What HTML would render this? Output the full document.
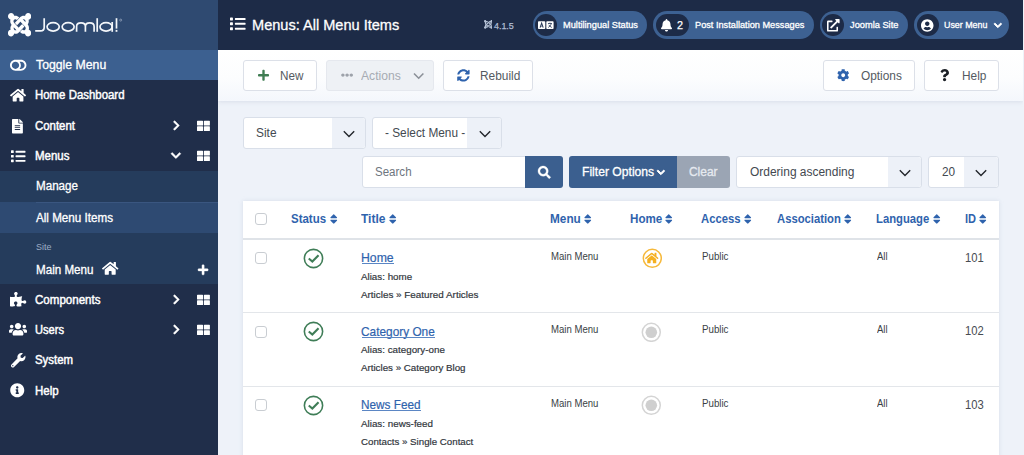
<!DOCTYPE html>
<html><head><meta charset="utf-8"><title>Menus: All Menu Items</title>
<style>
html,body{margin:0;padding:0}
body{width:1024px;height:455px;overflow:hidden;position:relative;background:#eef2f9;font-family:'Liberation Sans',sans-serif;}
div,span,svg{position:absolute;box-sizing:border-box}
span{white-space:pre;transform-origin:0 50%}
</style></head><body>
<div style="left:218px;top:50px;width:805px;height:51px;background:linear-gradient(#ffffff 0%,#fcfdfe 55%,#f4f7fc 100%);box-shadow:0 1px 4px rgba(180,190,208,.35);"></div>
<div style="left:218px;top:0px;width:805px;height:50px;background:#1d2b47;"></div>
<div style="left:0px;top:0px;width:218px;height:455px;background:#202e4a;"></div>
<div style="left:0px;top:0px;width:218px;height:50px;background:#2f4a71;"></div>
<div style="left:0px;top:50px;width:218px;height:30px;background:#3c6090;"></div>
<div style="left:0px;top:171px;width:218px;height:113px;background:#253c5c;"></div>
<div style="left:0px;top:202px;width:218px;height:31px;background:#2e4a72;"></div>
<div style="left:36px;top:202px;width:182px;height:1px;background:#3a5680;"></div>
<svg style="left:7.90px;top:13.28px" width="23.20" height="23.43" viewBox="0.6 32 444.8 420.4" preserveAspectRatio="none"><g fill="#ffffff"><path d="M.6 92.1C.6 58.8 27.4 32 60.4 32c30 0 54.5 21.9 59.2 50.2 32.6-7.6 67.1.6 96.5 30l-44.3 44.3c-20.5-20.5-42.6-16.3-55.4-3.5-14.3 14.3-14.3 37.9 0 52.2l99.5 99.5-44 44.3c-87.7-87.2-49.7-49.7-99.8-99.7-26.8-26.5-35-64.8-24.8-98.9C20.4 144.6.6 120.7.6 92.1z"/><path d="M130.1 208.5l44.3 44.3c10-10 89.7-89.7 99.7-99.8 14.3-14.3 37.6-14.3 51.9 0 12.8 12.8 17 35-3.5 55.4l44 44.3c31.2-31.2 38.5-67.6 28.9-101.2 29.2-4.1 51.9-29.2 51.9-59.5 0-33.2-26.8-60.1-59.8-60.1-30.3 0-55.4 22.8-59.500 52.200-33.500-9.600-70.300-2.500-101.500 28.600-23.300 23.500-73.300 73.500-96.400 96.600z"/><path d="M.6 92.1C.6 58.8 27.4 32 60.4 32c30 0 54.5 21.9 59.2 50.2 32.6-7.6 67.1.6 96.5 30l-44.3 44.3c-20.5-20.5-42.6-16.3-55.4-3.5-14.3 14.3-14.3 37.9 0 52.2l99.5 99.5-44 44.3c-87.7-87.2-49.7-49.7-99.8-99.7-26.8-26.5-35-64.8-24.8-98.9C20.4 144.6.6 120.7.6 92.1z" transform="rotate(180 223 242.2)"/><path d="M130.1 208.5l44.3 44.3c10-10 89.7-89.7 99.7-99.8 14.3-14.3 37.6-14.3 51.9 0 12.8 12.8 17 35-3.5 55.4l44 44.3c31.2-31.2 38.5-67.6 28.9-101.2 29.2-4.1 51.9-29.2 51.9-59.5 0-33.2-26.8-60.1-59.8-60.1-30.3 0-55.4 22.8-59.500 52.200-33.500-9.600-70.300-2.500-101.500 28.600-23.300 23.500-73.300 73.500-96.400 96.600z" transform="rotate(180 223 242.2)"/></g></svg>
<svg style="left:34px;top:14px" width="92" height="22" viewBox="34 14 92 22" preserveAspectRatio="none"><g fill="none" stroke="#f4f7fb" stroke-width="1.7" stroke-linecap="butt"><path d="M44.2 18.2 V27.3 Q44.2 30.95 40.5 30.95 H35.2"/><ellipse cx="53.15" cy="26.85" rx="6.1" ry="4.2"/><ellipse cx="68.15" cy="26.85" rx="6.0" ry="4.2"/><path d="M76.6 31.8 V26.4 Q76.6 22.9 81 22.9 Q85.4 22.9 85.4 26.4 V31.8 M85.4 26.4 Q85.4 22.9 89.75 22.9 Q94.1 22.9 94.1 26.4 V31.8"/><path d="M97.2 18.2 V31.8"/><ellipse cx="106.05" cy="26.85" rx="6.1" ry="4.2"/><path d="M112.2 22 V31.8"/><path d="M116.5 18.2 V28.6"/></g><rect x="115.6" y="29.9" width="1.8" height="1.9" fill="#f4f7fb"/><circle cx="120.7" cy="20.1" r="1" fill="none" stroke="#aebbd0" stroke-width=".6"/></svg>
<svg style="left:9.79px;top:57.70px;overflow:visible" width="16.43" height="14.60" viewBox="0 0 576 512" preserveAspectRatio="none"><path fill="#ffffff" d="M384 64H192C85.961 64 0 149.961 0 256s85.961 192 192 192h192c106.039 0 192-85.961 192-192S490.039 64 384 64zM64 256c0-70.741 57.249-128 128-128 70.741 0 128 57.249 128 128 0 70.741-57.249 128-128 128-70.741 0-128-57.249-128-128zm320 128h-48.905c65.217-72.858 65.236-183.12 0-256H384c70.741 0 128 57.249 128 128 0 70.74-57.249 128-128 128z"/></svg>
<span style="left:35.80px;top:57.36px;font-size:12px;line-height:17px;color:#ffffff;transform:scaleX(1.0216);-webkit-text-stroke:0.3px #ffffff;">Toggle Menu</span>
<svg style="left:9.96px;top:88.35px;overflow:visible" width="16.09" height="14.30" viewBox="0 0 576 512" preserveAspectRatio="none"><path fill="#ffffff" d="M280.37 148.26L96 300.11V464a16 16 0 0 0 16 16l112.06-.29a16 16 0 0 0 15.92-16V368a16 16 0 0 1 16-16h64a16 16 0 0 1 16 16v95.64a16 16 0 0 0 16 16.05L464 480a16 16 0 0 0 16-16V300L295.67 148.26a12.19 12.19 0 0 0-15.3 0zM571.6 251.47L488 182.56V44.05a12 12 0 0 0-12-12h-56a12 12 0 0 0-12 12v72.61L318.47 43a48 48 0 0 0-61 0L4.34 251.47a12 12 0 0 0-1.6 16.9l25.5 31A12 12 0 0 0 45.15 301l235.22-193.74a12.19 12.19 0 0 1 15.3 0L530.9 301a12 12 0 0 0 16.9-1.6l25.5-31a12 12 0 0 0-1.7-16.93z"/></svg>
<span style="left:35.00px;top:87.36px;font-size:12px;line-height:17px;color:#ffffff;transform:scaleX(0.9515);-webkit-text-stroke:0.45px #ffffff;">Home Dashboard</span>
<svg style="left:12.26px;top:118.55px;overflow:visible" width="10.88" height="14.50" viewBox="0 0 384 512" preserveAspectRatio="none"><path fill="#ffffff" d="M224 136V0H24C10.7 0 0 10.7 0 24v464c0 13.3 10.7 24 24 24h336c13.3 0 24-10.7 24-24V160H248c-13.2 0-24-10.8-24-24zm64 236c0 6.6-5.4 12-12 12H108c-6.6 0-12-5.4-12-12v-8c0-6.6 5.4-12 12-12h168c6.6 0 12 5.4 12 12v8zm0-64c0 6.6-5.4 12-12 12H108c-6.6 0-12-5.4-12-12v-8c0-6.6 5.4-12 12-12h168c6.6 0 12 5.4 12 12v8zm0-72v8c0 6.6-5.4 12-12 12H108c-6.6 0-12-5.4-12-12v-8c0-6.6 5.4-12 12-12h168c6.6 0 12 5.4 12 12zm96-114.1v6.1H256V0h6.1c6.4 0 12.5 2.5 17 7l97.9 98c4.5 4.5 7 10.6 7 16.9z"/></svg>
<span style="left:35.00px;top:118.36px;font-size:12px;line-height:17px;color:#ffffff;transform:scaleX(0.9517);-webkit-text-stroke:0.45px #ffffff;">Content</span>
<svg style="left:10.55px;top:148.75px;overflow:visible" width="14.50" height="14.50" viewBox="0 0 512 512" preserveAspectRatio="none"><path fill="#ffffff" d="M80 368H16a16 16 0 0 0-16 16v64a16 16 0 0 0 16 16h64a16 16 0 0 0 16-16v-64a16 16 0 0 0-16-16zm0-320H16A16 16 0 0 0 0 64v64a16 16 0 0 0 16 16h64a16 16 0 0 0 16-16V64a16 16 0 0 0-16-16zm0 160H16a16 16 0 0 0-16 16v64a16 16 0 0 0 16 16h64a16 16 0 0 0 16-16v-64a16 16 0 0 0-16-16zm416 176H176a16 16 0 0 0-16 16v32a16 16 0 0 0 16 16h320a16 16 0 0 0 16-16v-32a16 16 0 0 0-16-16zm0-320H176a16 16 0 0 0-16 16v32a16 16 0 0 0 16 16h320a16 16 0 0 0 16-16V80a16 16 0 0 0-16-16zm0 160H176a16 16 0 0 0-16 16v32a16 16 0 0 0 16 16h320a16 16 0 0 0 16-16v-32a16 16 0 0 0-16-16z"/></svg>
<span style="left:35.00px;top:148.36px;font-size:12px;line-height:17px;color:#ffffff;transform:scaleX(0.9575);-webkit-text-stroke:0.45px #ffffff;">Menus</span>
<span style="left:36.00px;top:178.36px;font-size:12px;line-height:17px;color:#ffffff;transform:scaleX(0.9683);-webkit-text-stroke:0.3px #ffffff;">Manage</span>
<span style="left:36.00px;top:210.36px;font-size:12px;line-height:17px;color:#ffffff;transform:scaleX(0.9703);-webkit-text-stroke:0.3px #ffffff;">All Menu Items</span>
<span style="left:36.20px;top:241.40px;font-size:9px;line-height:13px;color:#9dadc6;transform:scaleX(0.9925);">Site</span>
<span style="left:36.00px;top:262.36px;font-size:12px;line-height:17px;color:#ffffff;transform:scaleX(0.9684);-webkit-text-stroke:0.3px #ffffff;">Main Menu</span>
<svg style="left:102.29px;top:261.30px;overflow:visible" width="16.43" height="14.60" viewBox="0 0 576 512" preserveAspectRatio="none"><path fill="#ffffff" d="M280.37 148.26L96 300.11V464a16 16 0 0 0 16 16l112.06-.29a16 16 0 0 0 15.92-16V368a16 16 0 0 1 16-16h64a16 16 0 0 1 16 16v95.64a16 16 0 0 0 16 16.05L464 480a16 16 0 0 0 16-16V300L295.67 148.26a12.19 12.19 0 0 0-15.3 0zM571.6 251.47L488 182.56V44.05a12 12 0 0 0-12-12h-56a12 12 0 0 0-12 12v72.61L318.47 43a48 48 0 0 0-61 0L4.34 251.47a12 12 0 0 0-1.6 16.9l25.5 31A12 12 0 0 0 45.15 301l235.22-193.74a12.19 12.19 0 0 1 15.3 0L530.9 301a12 12 0 0 0 16.9-1.6l25.5-31a12 12 0 0 0-1.7-16.93z"/></svg>
<svg style="left:197.93px;top:264.10px;overflow:visible" width="10.15" height="11.60" viewBox="0 0 448 512" preserveAspectRatio="none"><path fill="#ffffff" stroke="#ffffff" stroke-width="18" stroke-linejoin="round" d="M416 208H272V64c0-17.67-14.33-32-32-32h-32c-17.67 0-32 14.33-32 32v144H32c-17.67 0-32 14.33-32 32v32c0 17.670 14.330 32 32 32h144v144c0 17.670 14.330 32 32 32h32c17.670 0 32-14.330 32-32V304h144c17.670 0 32-14.330 32-32v-32c0-17.670-14.330-32-32-32z"/></svg>
<svg style="left:10.24px;top:292.25px;overflow:visible" width="16.31" height="14.50" viewBox="0 0 576 512" preserveAspectRatio="none"><path fill="#ffffff" d="M519.442 288.651c-41.519 0-59.5 31.593-82.058 31.593C377.409 320.244 432 144 432 144s-196.288 80-196.288-3.297c0-35.827 36.288-46.25 36.288-85.985C272 19.216 243.885 0 210.539 0c-34.654 0-66.366 18.891-66.366 56.346 0 41.364 31.711 59.277 31.711 81.75C175.885 207.719 0 166.758 0 166.758v333.237s178.635 41.047 178.635-28.662c0-22.473-40-40.107-40-81.471 0-37.456 29.25-56.346 63.577-56.346 33.673 0 61.788 19.216 61.788 54.717 0 39.735-36.288 50.158-36.288 85.985 0 60.803 129.675 25.73 181.23 25.73 0 0-34.725-120.101 25.827-120.101 35.962 0 46.423 36.152 86.308 36.152C556.712 416 576 387.99 576 354.443c0-34.199-18.962-65.792-56.558-65.792z"/></svg>
<span style="left:35.00px;top:292.36px;font-size:12px;line-height:17px;color:#ffffff;transform:scaleX(0.9626);-webkit-text-stroke:0.45px #ffffff;">Components</span>
<svg style="left:8.70px;top:322.30px;overflow:visible" width="18.00" height="14.40" viewBox="0 0 640 512" preserveAspectRatio="none"><path fill="#ffffff" d="M96 224c35.3 0 64-28.7 64-64s-28.7-64-64-64-64 28.7-64 64 28.7 64 64 64zm448 0c35.3 0 64-28.7 64-64s-28.7-64-64-64-64 28.7-64 64 28.7 64 64 64zm32 32h-64c-17.6 0-33.5 7.1-45.1 18.6 40.3 22.1 68.9 62 75.1 109.4h66c17.700 0 32-14.300 32-32v-32c0-35.300-28.700-64-64-64zm-256 0c61.900 0 112-50.100 112-112S381.900 32 320 32 208 82.100 208 144s50.100 112 112 112zm76.800 32h-8.300c-20.800 10-43.900 16-68.500 16s-47.600-6-68.500-16h-8.300C179.600 288 128 339.600 128 403.200V432c0 26.500 21.500 48 48 48h288c26.500 0 48-21.500 48-48v-28.800c0-63.600-51.600-115.200-115.200-115.200zm-223.700-13.400C161.500 263.100 145.600 256 128 256H64c-35.300 0-64 28.700-64 64v32c0 17.700 14.300 32 32 32h65.900c6.300-47.400 34.900-87.300 75.200-109.400z"/></svg>
<span style="left:35.00px;top:322.36px;font-size:12px;line-height:17px;color:#ffffff;transform:scaleX(0.9252);-webkit-text-stroke:0.45px #ffffff;">Users</span>
<svg style="left:10.85px;top:352.95px;overflow:visible" width="14.50" height="14.50" viewBox="0 0 512 512" preserveAspectRatio="none"><path fill="#ffffff" d="M507.73 109.1c-2.24-9.03-13.54-12.09-20.12-5.51l-74.36 74.36-67.88-11.31-11.31-67.88 74.36-74.36c6.620-6.620 3.430-17.900-5.660-20.160-47.380-11.740-99.550.910-136.580 37.930-39.640 39.640-50.550 97.100-34.050 147.200L18.740 402.760c-24.990 24.990-24.990 65.510 0 90.500 24.990 24.990 65.510 24.990 90.500 0l213.210-213.210c50.120 16.710 107.470 5.680 147.370-34.220 37.070-37.070 49.700-89.320 37.910-136.730zM64 472c-13.250 0-24-10.750-24-24 0-13.260 10.750-24 24-24s24 10.740 24 24c0 13.250-10.750 24-24 24z"/></svg>
<span style="left:35.00px;top:352.36px;font-size:12px;line-height:17px;color:#ffffff;transform:scaleX(0.9496);-webkit-text-stroke:0.45px #ffffff;">System</span>
<svg style="left:10.25px;top:383.45px;overflow:visible" width="14.50" height="14.50" viewBox="0 0 512 512" preserveAspectRatio="none"><path fill="#ffffff" d="M256 8C119.043 8 8 119.083 8 256c0 136.997 111.043 248 248 248s248-111.003 248-248C504 119.083 392.957 8 256 8zm0 110c23.196 0 42 18.804 42 42s-18.804 42-42 42-42-18.804-42-42 18.804-42 42-42zm56 254c0 6.627-5.373 12-12 12h-88c-6.627 0-12-5.373-12-12v-24c0-6.627 5.373-12 12-12h12v-64h-12c-6.627 0-12-5.373-12-12v-24c0-6.627 5.373-12 12-12h64c6.627 0 12 5.373 12 12v100h12c6.627 0 12 5.373 12 12v24z"/></svg>
<span style="left:35.00px;top:383.36px;font-size:12px;line-height:17px;color:#ffffff;transform:scaleX(0.9559);-webkit-text-stroke:0.45px #ffffff;">Help</span>
<svg style="left:172.56px;top:120.10px;overflow:visible" width="6.88" height="11.00" viewBox="0 0 320 512" preserveAspectRatio="none"><path fill="#ffffff" stroke="#ffffff" stroke-width="22" stroke-linejoin="round" d="M285.476 272.971L91.132 467.314c-9.373 9.373-24.569 9.373-33.941 0l-22.667-22.667c-9.357-9.357-9.375-24.522-.04-33.901L188.505 256 34.484 101.255c-9.335-9.379-9.317-24.544.04-33.901l22.667-22.667c9.373-9.373 24.569-9.373 33.941 0L285.475 239.03c9.373 9.372 9.373 24.568.001 33.941z"/></svg>
<svg style="left:196.75px;top:119.70px;overflow:visible" width="12.90" height="11.80" viewBox="0 0 512 512" preserveAspectRatio="none"><path fill="#ffffff" d="M296 32h192c13.255 0 24 10.745 24 24v160c0 13.255-10.745 24-24 24H296c-13.255 0-24-10.745-24-24V56c0-13.255 10.745-24 24-24zm-80 0H24C10.745 32 0 42.745 0 56v160c0 13.255 10.745 24 24 24h192c13.255 0 24-10.745 24-24V56c0-13.255-10.745-24-24-24zM0 296v160c0 13.255 10.745 24 24 24h192c13.255 0 24-10.745 24-24V296c0-13.255-10.745-24-24-24H24c-13.255 0-24 10.745-24 24zm296 184h192c13.255 0 24-10.745 24-24V296c0-13.255-10.745-24-24-24H296c-13.255 0-24 10.745-24 24v160c0 13.255 10.745 24 24 24z"/></svg>
<svg style="left:172.56px;top:294.10px;overflow:visible" width="6.88" height="11.00" viewBox="0 0 320 512" preserveAspectRatio="none"><path fill="#ffffff" stroke="#ffffff" stroke-width="22" stroke-linejoin="round" d="M285.476 272.971L91.132 467.314c-9.373 9.373-24.569 9.373-33.941 0l-22.667-22.667c-9.357-9.357-9.375-24.522-.04-33.901L188.505 256 34.484 101.255c-9.335-9.379-9.317-24.544.04-33.901l22.667-22.667c9.373-9.373 24.569-9.373 33.941 0L285.475 239.03c9.373 9.372 9.373 24.568.001 33.941z"/></svg>
<svg style="left:196.75px;top:293.70px;overflow:visible" width="12.90" height="11.80" viewBox="0 0 512 512" preserveAspectRatio="none"><path fill="#ffffff" d="M296 32h192c13.255 0 24 10.745 24 24v160c0 13.255-10.745 24-24 24H296c-13.255 0-24-10.745-24-24V56c0-13.255 10.745-24 24-24zm-80 0H24C10.745 32 0 42.745 0 56v160c0 13.255 10.745 24 24 24h192c13.255 0 24-10.745 24-24V56c0-13.255-10.745-24-24-24zM0 296v160c0 13.255 10.745 24 24 24h192c13.255 0 24-10.745 24-24V296c0-13.255-10.745-24-24-24H24c-13.255 0-24 10.745-24 24zm296 184h192c13.255 0 24-10.745 24-24V296c0-13.255-10.745-24-24-24H296c-13.255 0-24 10.745-24 24v160c0 13.255 10.745 24 24 24z"/></svg>
<svg style="left:172.56px;top:324.30px;overflow:visible" width="6.88" height="11.00" viewBox="0 0 320 512" preserveAspectRatio="none"><path fill="#ffffff" stroke="#ffffff" stroke-width="22" stroke-linejoin="round" d="M285.476 272.971L91.132 467.314c-9.373 9.373-24.569 9.373-33.941 0l-22.667-22.667c-9.357-9.357-9.375-24.522-.04-33.901L188.505 256 34.484 101.255c-9.335-9.379-9.317-24.544.04-33.901l22.667-22.667c9.373-9.373 24.569-9.373 33.941 0L285.475 239.03c9.373 9.372 9.373 24.568.001 33.941z"/></svg>
<svg style="left:196.75px;top:323.90px;overflow:visible" width="12.90" height="11.80" viewBox="0 0 512 512" preserveAspectRatio="none"><path fill="#ffffff" d="M296 32h192c13.255 0 24 10.745 24 24v160c0 13.255-10.745 24-24 24H296c-13.255 0-24-10.745-24-24V56c0-13.255 10.745-24 24-24zm-80 0H24C10.745 32 0 42.745 0 56v160c0 13.255 10.745 24 24 24h192c13.255 0 24-10.745 24-24V56c0-13.255-10.745-24-24-24zM0 296v160c0 13.255 10.745 24 24 24h192c13.255 0 24-10.745 24-24V296c0-13.255-10.745-24-24-24H24c-13.255 0-24 10.745-24 24zm296 184h192c13.255 0 24-10.745 24-24V296c0-13.255-10.745-24-24-24H296c-13.255 0-24 10.745-24 24v160c0 13.255 10.745 24 24 24z"/></svg>
<svg style="left:170.90px;top:150.30px;overflow:visible" width="9.80" height="11.20" viewBox="0 0 448 512" preserveAspectRatio="none"><path fill="#ffffff" stroke="#ffffff" stroke-width="22" stroke-linejoin="round" d="M207.029 381.476L12.686 187.132c-9.373-9.373-9.373-24.569 0-33.941l22.667-22.667c9.357-9.357 24.522-9.375 33.901-.04L224 284.505l154.745-154.021c9.379-9.335 24.544-9.317 33.901.04l22.667 22.667c9.373 9.373 9.373 24.569 0 33.941L240.971 381.476c-9.373 9.372-24.569 9.372-33.942 0z"/></svg>
<svg style="left:196.75px;top:150.00px;overflow:visible" width="12.90" height="11.80" viewBox="0 0 512 512" preserveAspectRatio="none"><path fill="#ffffff" d="M296 32h192c13.255 0 24 10.745 24 24v160c0 13.255-10.745 24-24 24H296c-13.255 0-24-10.745-24-24V56c0-13.255 10.745-24 24-24zm-80 0H24C10.745 32 0 42.745 0 56v160c0 13.255 10.745 24 24 24h192c13.255 0 24-10.745 24-24V56c0-13.255-10.745-24-24-24zM0 296v160c0 13.255 10.745 24 24 24h192c13.255 0 24-10.745 24-24V296c0-13.255-10.745-24-24-24H24c-13.255 0-24 10.745-24 24zm296 184h192c13.255 0 24-10.745 24-24V296c0-13.255-10.745-24-24-24H296c-13.255 0-24 10.745-24 24v160c0 13.255 10.745 24 24 24z"/></svg>
<svg style="left:230.00px;top:16.20px;overflow:visible" width="15.60" height="15.60" viewBox="0 0 512 512" preserveAspectRatio="none"><path fill="#ffffff" d="M80 368H16a16 16 0 0 0-16 16v64a16 16 0 0 0 16 16h64a16 16 0 0 0 16-16v-64a16 16 0 0 0-16-16zm0-320H16A16 16 0 0 0 0 64v64a16 16 0 0 0 16 16h64a16 16 0 0 0 16-16V64a16 16 0 0 0-16-16zm0 160H16a16 16 0 0 0-16 16v64a16 16 0 0 0 16 16h64a16 16 0 0 0 16-16v-64a16 16 0 0 0-16-16zm416 176H176a16 16 0 0 0-16 16v32a16 16 0 0 0 16 16h320a16 16 0 0 0 16-16v-32a16 16 0 0 0-16-16zm0-320H176a16 16 0 0 0-16 16v32a16 16 0 0 0 16 16h320a16 16 0 0 0 16-16V80a16 16 0 0 0-16-16zm0 160H176a16 16 0 0 0-16 16v32a16 16 0 0 0 16 16h320a16 16 0 0 0 16-16v-32a16 16 0 0 0-16-16z"/></svg>
<span style="left:251.75px;top:14.32px;font-size:15px;line-height:21px;color:#ffffff;transform:scaleX(0.9704);-webkit-text-stroke:0.3px #ffffff;">Menus: All Menu Items</span>
<svg style="left:483.65px;top:20.21px" width="8.70" height="8.79" viewBox="0.6 32 444.8 420.4" preserveAspectRatio="none"><g fill="#b4c1d5"><path d="M.6 92.1C.6 58.8 27.4 32 60.4 32c30 0 54.5 21.9 59.2 50.2 32.6-7.6 67.1.6 96.5 30l-44.3 44.3c-20.5-20.5-42.6-16.3-55.4-3.5-14.3 14.3-14.3 37.9 0 52.2l99.5 99.5-44 44.3c-87.7-87.2-49.7-49.7-99.8-99.7-26.8-26.5-35-64.8-24.8-98.9C20.4 144.6.6 120.7.6 92.1z"/><path d="M130.1 208.5l44.3 44.3c10-10 89.7-89.7 99.7-99.8 14.3-14.3 37.6-14.3 51.9 0 12.8 12.8 17 35-3.5 55.4l44 44.3c31.2-31.2 38.5-67.6 28.9-101.2 29.2-4.1 51.9-29.2 51.9-59.5 0-33.2-26.8-60.1-59.8-60.1-30.3 0-55.4 22.8-59.500 52.200-33.500-9.600-70.300-2.500-101.500 28.600-23.300 23.500-73.300 73.500-96.400 96.600z"/><path d="M.6 92.1C.6 58.8 27.4 32 60.4 32c30 0 54.5 21.9 59.2 50.2 32.6-7.6 67.1.6 96.5 30l-44.3 44.3c-20.5-20.5-42.6-16.3-55.4-3.5-14.3 14.3-14.3 37.9 0 52.2l99.5 99.5-44 44.3c-87.7-87.2-49.7-49.7-99.8-99.7-26.8-26.5-35-64.8-24.8-98.9C20.4 144.6.6 120.7.6 92.1z" transform="rotate(180 223 242.2)"/><path d="M130.1 208.5l44.3 44.3c10-10 89.7-89.7 99.7-99.8 14.3-14.3 37.6-14.3 51.9 0 12.8 12.8 17 35-3.5 55.4l44 44.3c31.2-31.2 38.5-67.6 28.9-101.2 29.2-4.1 51.9-29.2 51.9-59.5 0-33.2-26.8-60.1-59.8-60.1-30.3 0-55.4 22.8-59.500 52.200-33.500-9.600-70.300-2.500-101.500 28.600-23.300 23.500-73.300 73.500-96.400 96.600z" transform="rotate(180 223 242.2)"/></g></svg>
<span style="left:494.40px;top:19.19px;font-size:9.6px;line-height:13px;color:#b0bed3;transform:scaleX(0.9277);-webkit-text-stroke:0.25px #b0bed3;">4.1.5</span>
<div style="left:532.5px;top:11px;width:114.5px;height:28px;background:#3d6192;border-radius:14px;"></div>
<div style="left:535px;top:14px;width:22px;height:22px;background:#1d2b47;border-radius:11px;"></div>
<svg style="left:538.2px;top:20.9px" width="15.6" height="8.3" viewBox="0 0 15 10" preserveAspectRatio="none"><rect x="0" y="0.4" width="7" height="9.2" rx=".8" fill="#fff"/><rect x="8" y="0.4" width="7" height="9.2" rx=".8" fill="#fff"/><path d="M2 8 L3.5 2.4 L5 8 M2.5 6.2 H4.5" fill="none" stroke="#2a3b5a" stroke-width="1"/><path d="M9.6 3 H13.4 M11.5 2 V3 M12.9 3 Q12.3 6.2 9.8 7.8 M10.4 4.6 Q11.4 6.8 13.3 7.8" fill="none" stroke="#2a3b5a" stroke-width=".9"/></svg>
<span style="left:563.00px;top:19.30px;font-size:9.3px;line-height:13px;color:#ffffff;transform:scaleX(0.9940);-webkit-text-stroke:0.3px #ffffff;">Multilingual Status</span>
<div style="left:653px;top:11px;width:161px;height:28px;background:#3d6192;border-radius:14px;"></div>
<div style="left:655.5px;top:14px;width:33px;height:22px;background:#1d2b47;border-radius:11px;"></div>
<svg style="left:660.79px;top:18.70px;overflow:visible" width="11.03" height="12.60" viewBox="0 0 448 512" preserveAspectRatio="none"><path fill="#ffffff" d="M224 512c35.32 0 63.97-28.65 63.97-64H160.03c0 35.35 28.65 64 63.97 64zm215.39-149.71c-19.32-20.76-55.47-51.99-55.47-154.29 0-77.7-54.48-139.9-127.94-155.16V32c0-17.67-14.32-32-31.98-32s-31.98 14.33-31.98 32v20.84C118.56 68.1 64.08 130.3 64.08 208c0 102.3-36.15 133.53-55.47 154.29-6 6.45-8.66 14.16-8.61 21.71.11 16.4 12.98 32 32.1 32h383.8c19.12 0 32-15.6 32.1-32 .05-7.55-2.61-15.27-8.61-21.71z"/></svg>
<span style="left:677.40px;top:17.92px;font-size:10.4px;line-height:15px;color:#ffffff;transform:scaleX(1.0378);-webkit-text-stroke:0.25px #ffffff;">2</span>
<span style="left:695.25px;top:19.30px;font-size:9.3px;line-height:13px;color:#ffffff;transform:scaleX(0.9888);-webkit-text-stroke:0.3px #ffffff;">Post Installation Messages</span>
<div style="left:819.6px;top:11px;width:88.14999999999998px;height:28px;background:#3d6192;border-radius:14px;"></div>
<div style="left:822.4px;top:14px;width:22px;height:22px;background:#1d2b47;border-radius:11px;"></div>
<svg style="left:827.30px;top:18.50px;overflow:visible" width="12.60" height="12.60" viewBox="0 0 512 512" preserveAspectRatio="none"><path fill="#ffffff" d="M432,320H400a16,16,0,0,0-16,16V448H64V128H208a16,16,0,0,0,16-16V80a16,16,0,0,0-16-16H48A48,48,0,0,0,0,112V464a48,48,0,0,0,48,48H400a48,48,0,0,0,48-48V336A16,16,0,0,0,432,320ZM488,0h-128c-21.370,0-32.050,25.910-17,41l35.730,35.730L135,320.370a24,24,0,0,0,0,34L157.670,377a24,24,0,0,0,34,0L435.280,133.320,471,169c15,15,41,4.500,41-17V24A24,24,0,0,0,488,0Z"/></svg>
<span style="left:850.00px;top:19.30px;font-size:9.3px;line-height:13px;color:#ffffff;transform:scaleX(0.9963);-webkit-text-stroke:0.3px #ffffff;">Joomla Site</span>
<div style="left:914px;top:11px;width:94.70000000000005px;height:28px;background:#3d6192;border-radius:14px;"></div>
<div style="left:916.5px;top:14px;width:22px;height:22px;background:#1d2b47;border-radius:11px;"></div>
<svg style="left:921.15px;top:18.55px;overflow:visible" width="12.50" height="12.90" viewBox="0 0 496 512" preserveAspectRatio="none"><path fill="#ffffff" d="M248 8C111 8 0 119 0 256s111 248 248 248 248-111 248-248S385 8 248 8zm0 96c48.6 0 88 39.4 88 88s-39.4 88-88 88-88-39.4-88-88 39.4-88 88-88zm0 344c-58.7 0-111.3-26.6-146.5-68.2 18.8-35.4 55.6-59.8 98.5-59.8 2.4 0 4.8.4 7.1 1.100 13 4.200 26.600 6.900 40.900 6.900 14.300 0 28-2.700 40.900-6.900 2.300-.700 4.700-1.100 7.100-1.100 42.900 0 79.700 24.400 98.500 59.800C359.300 421.400 306.700 448 248 448z"/></svg>
<span style="left:944.00px;top:19.30px;font-size:9.3px;line-height:13px;color:#ffffff;transform:scaleX(0.9545);-webkit-text-stroke:0.3px #ffffff;">User Menu</span>
<svg style="left:993.55px;top:20.80px;overflow:visible" width="7.70" height="8.80" viewBox="0 0 448 512" preserveAspectRatio="none"><path fill="#ffffff" stroke="#ffffff" stroke-width="50" stroke-linejoin="round" d="M207.029 381.476L12.686 187.132c-9.373-9.373-9.373-24.569 0-33.941l22.667-22.667c9.357-9.357 24.522-9.375 33.901-.04L224 284.505l154.745-154.021c9.379-9.335 24.544-9.317 33.901.04l22.667 22.667c9.373 9.373 9.373 24.569 0 33.941L240.971 381.476c-9.373 9.372-24.569 9.372-33.942 0z"/></svg>
<div style="left:243px;top:60px;width:73.5px;height:31px;background:#fff;border:1px solid #dce0e8;border-radius:3px;"></div>
<svg style="left:257.99px;top:68.70px;overflow:visible" width="11.03" height="12.60" viewBox="0 0 448 512" preserveAspectRatio="none"><path fill="#3f7d52" d="M416 208H272V64c0-17.67-14.33-32-32-32h-32c-17.67 0-32 14.33-32 32v144H32c-17.67 0-32 14.33-32 32v32c0 17.670 14.330 32 32 32h144v144c0 17.670 14.330 32 32 32h32c17.670 0 32-14.330 32-32V304h144c17.670 0 32-14.330 32-32v-32c0-17.670-14.330-32-32-32z"/></svg>
<span style="left:280.40px;top:66.69px;font-size:12.5px;line-height:18px;color:#545a61;transform:scaleX(0.9354);">New</span>
<div style="left:326.4px;top:60px;width:107.20000000000005px;height:31px;background:#eef1f5;border:1px solid #e5e8ee;border-radius:3px;"></div>
<svg style="left:340.80px;top:69.30px;overflow:visible" width="12.20" height="12.20" viewBox="0 0 512 512" preserveAspectRatio="none"><path fill="#9da2aa" d="M328 256c0 39.8-32.2 72-72 72s-72-32.2-72-72 32.2-72 72-72 72 32.2 72 72zm104-72c-39.8 0-72 32.2-72 72s32.2 72 72 72 72-32.2 72-72-32.2-72-72-72zm-352 0c-39.8 0-72 32.2-72 72s32.2 72 72 72 72-32.2 72-72-32.2-72-72-72z"/></svg>
<span style="left:361.00px;top:66.69px;font-size:12.5px;line-height:18px;color:#a6abb3;transform:scaleX(0.9707);">Actions</span>
<svg style="left:413px;top:71.5px" width="11.4" height="8" viewBox="0 0 11.4 8" preserveAspectRatio="none"><path d="M1 1.5 L5.7 6.2 L10.4 1.5" fill="none" stroke="#8b9098" stroke-width="1.6"/></svg>
<div style="left:443px;top:60px;width:89.5px;height:31px;background:#fff;border:1px solid #dce0e8;border-radius:3px;"></div>
<svg style="left:456.90px;top:69.00px;overflow:visible" width="12.80" height="12.80" viewBox="0 0 512 512" preserveAspectRatio="none"><path fill="#2f63ad" d="M370.72 133.28C339.458 104.008 298.888 87.962 255.848 88c-77.458.068-144.328 53.178-162.791 126.85-1.344 5.363-6.122 9.15-11.651 9.15H24.103c-7.498 0-13.194-6.807-11.807-14.176C33.933 94.924 134.813 8 256 8c66.448 0 126.791 26.136 171.315 68.685L463.03 40.97C478.149 25.851 504 36.559 504 57.941V192c0 13.255-10.745 24-24 24H345.941c-21.382 0-32.09-25.851-16.971-40.971l41.75-41.749zM32 296h134.059c21.382 0 32.09 25.851 16.971 40.971l-41.75 41.75c31.262 29.273 71.835 45.319 114.876 45.28 77.418-.07 144.315-53.144 162.787-126.849 1.344-5.363 6.122-9.15 11.651-9.15h57.304c7.498 0 13.194 6.807 11.807 14.176C478.067 417.076 377.187 504 256 504c-66.448 0-126.791-26.136-171.315-68.685L48.97 471.03C33.851 486.149 8 475.441 8 454.059V320c0-13.255 10.745-24 24-24z"/></svg>
<span style="left:479.80px;top:66.69px;font-size:12.5px;line-height:18px;color:#545a61;transform:scaleX(0.9530);">Rebuild</span>
<div style="left:823.4px;top:60px;width:91.20000000000005px;height:31px;background:#fff;border:1px solid #dce0e8;border-radius:3px;"></div>
<svg style="left:837.20px;top:69.20px;overflow:visible" width="12.40" height="12.40" viewBox="0 0 512 512" preserveAspectRatio="none"><path fill="#2f63ad" d="M487.4 315.7l-42.6-24.6c4.3-23.2 4.3-47 0-70.2l42.6-24.6c4.9-2.8 7.1-8.6 5.5-14-11.1-35.6-30-67.8-54.7-94.600-3.800-4.100-10-5.100-14.800-2.300L380.800 110c-17.900-15.400-38.500-27.300-60.800-35.100V25.800c0-5.600-3.900-10.500-9.400-11.700-36.700-8.200-74.300-7.800-109.200 0-5.500 1.200-9.400 6.100-9.400 11.700V75c-22.200 7.900-42.800 19.800-60.800 35.100L88.700 85.500c-4.900-2.800-11-1.900-14.800 2.300-24.700 26.700-43.600 58.900-54.700 94.600-1.700 5.400.6 11.200 5.500 14L67.300 221c-4.300 23.200-4.300 47 0 70.200l-42.600 24.600c-4.900 2.800-7.100 8.600-5.500 14 11.100 35.600 30 67.800 54.700 94.600 3.800 4.100 10 5.100 14.800 2.300l42.600-24.600c17.900 15.400 38.500 27.300 60.800 35.100v49.200c0 5.600 3.900 10.500 9.400 11.700 36.700 8.200 74.300 7.800 109.200 0 5.500-1.200 9.400-6.100 9.400-11.700v-49.200c22.200-7.900 42.800-19.800 60.800-35.100l42.600 24.600c4.900 2.800 11 1.900 14.800-2.300 24.700-26.700 43.600-58.900 54.700-94.600 1.500-5.500-.7-11.300-5.600-14.100zM256 336c-44.100 0-80-35.900-80-80s35.900-80 80-80 80 35.900 80 80-35.900 80-80 80z"/></svg>
<span style="left:860.90px;top:66.69px;font-size:12.5px;line-height:18px;color:#545a61;transform:scaleX(0.9491);">Options</span>
<div style="left:924.3px;top:60px;width:74.40000000000009px;height:31px;background:#fff;border:1px solid #dce0e8;border-radius:3px;"></div>
<svg style="left:940.12px;top:69.20px;overflow:visible" width="9.15" height="12.20" viewBox="0 0 384 512" preserveAspectRatio="none"><path fill="#1c2026" d="M202.021 0C122.202 0 70.503 32.703 29.914 91.026c-7.363 10.58-5.093 25.086 5.178 32.874l43.138 32.709c10.373 7.865 25.132 6.026 33.253-4.148 25.049-31.381 43.63-49.449 82.757-49.449 30.764 0 68.816 19.799 68.816 49.631 0 22.552-18.617 34.134-48.993 51.164-35.423 19.86-82.299 44.576-82.299 106.405V320c0 13.255 10.745 24 24 24h72.471c13.255 0 24-10.745 24-24v-5.773c0-42.86 125.268-44.645 125.268-160.627C377.504 66.256 286.902 0 202.021 0zM192 373.459c-38.196 0-69.271 31.075-69.271 69.271 0 38.195 31.075 69.27 69.271 69.27s69.271-31.075 69.271-69.271-31.075-69.27-69.271-69.27z"/></svg>
<span style="left:961.80px;top:66.69px;font-size:12.5px;line-height:18px;color:#545a61;transform:scaleX(0.9487);">Help</span>
<div style="left:243px;top:117px;width:122.80000000000001px;height:31.5px;background:#fff;border:1px solid #d9dfe9;border-radius:3px;overflow:hidden;"></div>
<div style="left:332px;top:118px;width:32.80000000000001px;height:29.5px;background:#edf1f8;border-radius:0 3px 3px 0;"></div>
<svg style="left:342.9px;top:129.65px" width="12" height="8" viewBox="0 0 12 8" preserveAspectRatio="none"><path d="M0.8 1.2 L6 6.4 L11.2 1.2" fill="none" stroke="#22262b" stroke-width="1.4"/></svg>
<span style="left:255.50px;top:123.69px;font-size:12.5px;line-height:18px;color:#434950;transform:scaleX(0.9514);">Site</span>
<div style="left:372.2px;top:117px;width:129.55px;height:31.5px;background:#fff;border:1px solid #d9dfe9;border-radius:3px;overflow:hidden;"></div>
<div style="left:467.4px;top:118px;width:33.35000000000002px;height:29.5px;background:#edf1f8;border-radius:0 3px 3px 0;"></div>
<svg style="left:478.57px;top:129.65px" width="12" height="8" viewBox="0 0 12 8" preserveAspectRatio="none"><path d="M0.8 1.2 L6 6.4 L11.2 1.2" fill="none" stroke="#22262b" stroke-width="1.4"/></svg>
<span style="left:384.80px;top:123.69px;font-size:12.5px;line-height:18px;color:#434950;transform:scaleX(0.9461);">- Select Menu -</span>
<div style="left:362.4px;top:156px;width:165px;height:32px;background:#fff;border:1px solid #d9dfe9;border-radius:3px 0 0 3px;"></div>
<span style="left:375.20px;top:162.69px;font-size:12.5px;line-height:18px;color:#6d757e;transform:scaleX(0.9228);">Search</span>
<div style="left:524.7px;top:156px;width:38.1px;height:32px;background:#3b5f8f;border-radius:0 3px 3px 0;"></div>
<svg style="left:537.70px;top:165.50px;overflow:visible" width="12.60" height="12.60" viewBox="0 0 512 512" preserveAspectRatio="none"><path fill="#ffffff" stroke="#ffffff" stroke-width="14" stroke-linejoin="round" d="M505 442.7L405.3 343c-4.5-4.5-10.6-7-17-7H372c27.6-35.3 44-79.7 44-128C416 93.1 322.9 0 208 0S0 93.1 0 208s93.1 208 208 208c48.3 0 92.7-16.4 128-44v16.300c0 6.400 2.500 12.500 7 17l99.700 99.700c9.400 9.400 24.600 9.400 33.900 0l28.300-28.300c9.400-9.400 9.400-24.600.1-34zM208 336c-70.7 0-128-57.200-128-128 0-70.700 57.200-128 128-128 70.700 0 128 57.200 128 128 0 70.700-57.200 128-128 128z"/></svg>
<div style="left:569px;top:156px;width:108px;height:32px;background:#3b5f8f;border-radius:3px 0 0 3px;"></div>
<span style="left:581.60px;top:162.69px;font-size:12.5px;line-height:18px;color:#ffffff;transform:scaleX(0.9705);-webkit-text-stroke:0.3px #ffffff;">Filter Options</span>
<svg style="left:656.75px;top:167.80px;overflow:visible" width="7.70" height="8.80" viewBox="0 0 448 512" preserveAspectRatio="none"><path fill="#ffffff" stroke="#ffffff" stroke-width="55" stroke-linejoin="round" d="M207.029 381.476L12.686 187.132c-9.373-9.373-9.373-24.569 0-33.941l22.667-22.667c9.357-9.357 24.522-9.375 33.901-.04L224 284.505l154.745-154.021c9.379-9.335 24.544-9.317 33.901.04l22.667 22.667c9.373 9.373 9.373 24.569 0 33.941L240.971 381.476c-9.373 9.372-24.569 9.372-33.942 0z"/></svg>
<div style="left:677px;top:156px;width:53.3px;height:32px;background:#9ba5b4;border-radius:0 3px 3px 0;"></div>
<span style="left:688.80px;top:162.69px;font-size:12.5px;line-height:18px;color:#e6eaf0;transform:scaleX(0.9540);-webkit-text-stroke:0.3px #e6eaf0;">Clear</span>
<div style="left:735.9px;top:156px;width:186.30000000000007px;height:32px;background:#fff;border:1px solid #d9dfe9;border-radius:3px;overflow:hidden;"></div>
<div style="left:887.75px;top:157px;width:33.450000000000045px;height:30px;background:#edf1f8;border-radius:0 3px 3px 0;"></div>
<svg style="left:898.98px;top:168.9px" width="12" height="8" viewBox="0 0 12 8" preserveAspectRatio="none"><path d="M0.8 1.2 L6 6.4 L11.2 1.2" fill="none" stroke="#22262b" stroke-width="1.4"/></svg>
<span style="left:749.60px;top:162.69px;font-size:12.5px;line-height:18px;color:#434950;transform:scaleX(0.9568);">Ordering ascending</span>
<div style="left:928.4px;top:156px;width:70.30000000000007px;height:32px;background:#fff;border:1px solid #d9dfe9;border-radius:3px;overflow:hidden;"></div>
<div style="left:964px;top:157px;width:33.700000000000045px;height:30px;background:#edf1f8;border-radius:0 3px 3px 0;"></div>
<svg style="left:975.35px;top:168.9px" width="12" height="8" viewBox="0 0 12 8" preserveAspectRatio="none"><path d="M0.8 1.2 L6 6.4 L11.2 1.2" fill="none" stroke="#22262b" stroke-width="1.4"/></svg>
<span style="left:941.50px;top:162.69px;font-size:12.5px;line-height:18px;color:#434950;transform:scaleX(0.9420);">20</span>
<div style="left:243px;top:200.6px;width:756px;height:260px;background:#fff;box-shadow:0 0 4px rgba(170,182,205,.35);"></div>
<div style="left:243px;top:237.7px;width:756px;height:2px;background:#dfe3e8;"></div>
<div style="left:243px;top:312px;width:756px;height:1px;background:#e3e6ea;"></div>
<div style="left:243px;top:386px;width:756px;height:1px;background:#e3e6ea;"></div>
<div style="left:255.2px;top:213.3px;width:12px;height:12px;background:#fff;border:1px solid #c9cdd2;border-radius:3px;"></div>
<div style="left:255.2px;top:252.3px;width:12px;height:12px;background:#fff;border:1px solid #c9cdd2;border-radius:3px;"></div>
<div style="left:255.2px;top:325.8px;width:12px;height:12px;background:#fff;border:1px solid #c9cdd2;border-radius:3px;"></div>
<div style="left:255.2px;top:399.3px;width:12px;height:12px;background:#fff;border:1px solid #c9cdd2;border-radius:3px;"></div>
<span style="left:291.15px;top:209.69px;font-size:12.5px;line-height:18px;color:#2f63ad;transform:scaleX(0.9175);font-weight:700;">Status</span>
<svg style="left:329.85px;top:212.60px;overflow:visible" width="7.50" height="12.00" viewBox="0 0 320 512" preserveAspectRatio="none"><path fill="#2f63ad" d="M41 288h238c21.4 0 32.1 25.9 17 41L177 448c-9.4 9.4-24.6 9.4-33.9 0L24 329c-15.1-15.1-4.4-41 17-41zm255-105L177 64c-9.4-9.4-24.6-9.4-33.9 0L24 183c-15.1 15.100-4.400 41 17 41h238c21.400 0 32.100-25.900 17-41z"/></svg>
<span style="left:361.15px;top:209.69px;font-size:12.5px;line-height:18px;color:#2f63ad;transform:scaleX(0.9594);font-weight:700;">Title</span>
<svg style="left:389.25px;top:212.60px;overflow:visible" width="7.50" height="12.00" viewBox="0 0 320 512" preserveAspectRatio="none"><path fill="#2f63ad" d="M41 288h238c21.4 0 32.1 25.9 17 41L177 448c-9.4 9.4-24.6 9.4-33.9 0L24 329c-15.1-15.1-4.4-41 17-41zm255-105L177 64c-9.4-9.4-24.6-9.4-33.9 0L24 183c-15.1 15.100-4.400 41 17 41h238c21.400 0 32.100-25.900 17-41z"/></svg>
<span style="left:550.00px;top:209.69px;font-size:12.5px;line-height:18px;color:#2f63ad;transform:scaleX(0.9436);font-weight:700;">Menu</span>
<svg style="left:584.05px;top:212.60px;overflow:visible" width="7.50" height="12.00" viewBox="0 0 320 512" preserveAspectRatio="none"><path fill="#2f63ad" d="M41 288h238c21.4 0 32.1 25.9 17 41L177 448c-9.4 9.4-24.6 9.4-33.9 0L24 329c-15.1-15.1-4.4-41 17-41zm255-105L177 64c-9.4-9.4-24.6-9.4-33.9 0L24 183c-15.1 15.100-4.400 41 17 41h238c21.400 0 32.100-25.900 17-41z"/></svg>
<span style="left:629.70px;top:209.69px;font-size:12.5px;line-height:18px;color:#2f63ad;transform:scaleX(0.9299);font-weight:700;">Home</span>
<svg style="left:665.25px;top:212.60px;overflow:visible" width="7.50" height="12.00" viewBox="0 0 320 512" preserveAspectRatio="none"><path fill="#2f63ad" d="M41 288h238c21.4 0 32.1 25.9 17 41L177 448c-9.4 9.4-24.6 9.4-33.9 0L24 329c-15.1-15.1-4.4-41 17-41zm255-105L177 64c-9.4-9.4-24.6-9.4-33.9 0L24 183c-15.1 15.100-4.400 41 17 41h238c21.400 0 32.100-25.900 17-41z"/></svg>
<span style="left:700.90px;top:209.69px;font-size:12.5px;line-height:18px;color:#2f63ad;transform:scaleX(0.9019);font-weight:700;">Access</span>
<svg style="left:744.05px;top:212.60px;overflow:visible" width="7.50" height="12.00" viewBox="0 0 320 512" preserveAspectRatio="none"><path fill="#2f63ad" d="M41 288h238c21.4 0 32.1 25.9 17 41L177 448c-9.4 9.4-24.6 9.4-33.9 0L24 329c-15.1-15.1-4.4-41 17-41zm255-105L177 64c-9.4-9.4-24.6-9.4-33.9 0L24 183c-15.1 15.100-4.400 41 17 41h238c21.400 0 32.100-25.900 17-41z"/></svg>
<span style="left:776.80px;top:209.69px;font-size:12.5px;line-height:18px;color:#2f63ad;transform:scaleX(0.9018);font-weight:700;">Association</span>
<svg style="left:844.25px;top:212.60px;overflow:visible" width="7.50" height="12.00" viewBox="0 0 320 512" preserveAspectRatio="none"><path fill="#2f63ad" d="M41 288h238c21.4 0 32.1 25.9 17 41L177 448c-9.4 9.4-24.6 9.4-33.9 0L24 329c-15.1-15.1-4.4-41 17-41zm255-105L177 64c-9.4-9.4-24.6-9.4-33.9 0L24 183c-15.1 15.100-4.400 41 17 41h238c21.400 0 32.100-25.900 17-41z"/></svg>
<span style="left:876.20px;top:209.69px;font-size:12.5px;line-height:18px;color:#2f63ad;transform:scaleX(0.9010);font-weight:700;">Language</span>
<svg style="left:933.05px;top:212.60px;overflow:visible" width="7.50" height="12.00" viewBox="0 0 320 512" preserveAspectRatio="none"><path fill="#2f63ad" d="M41 288h238c21.4 0 32.1 25.9 17 41L177 448c-9.4 9.4-24.6 9.4-33.9 0L24 329c-15.1-15.1-4.4-41 17-41zm255-105L177 64c-9.4-9.4-24.6-9.4-33.9 0L24 183c-15.1 15.100-4.400 41 17 41h238c21.400 0 32.100-25.900 17-41z"/></svg>
<span style="left:964.65px;top:209.69px;font-size:12.5px;line-height:18px;color:#2f63ad;transform:scaleX(0.8840);font-weight:700;">ID</span>
<svg style="left:979.25px;top:212.60px;overflow:visible" width="7.50" height="12.00" viewBox="0 0 320 512" preserveAspectRatio="none"><path fill="#2f63ad" d="M41 288h238c21.4 0 32.1 25.9 17 41L177 448c-9.4 9.4-24.6 9.4-33.9 0L24 329c-15.1-15.1-4.4-41 17-41zm255-105L177 64c-9.4-9.4-24.6-9.4-33.9 0L24 183c-15.1 15.100-4.400 41 17 41h238c21.400 0 32.100-25.900 17-41z"/></svg>
<svg style="left:303.2px;top:247.8px" width="21" height="21" viewBox="0 0 20 20" preserveAspectRatio="none"><circle cx="10" cy="10" r="8.7" fill="none" stroke="#3f7d57" stroke-width="1.5"/><path d="M5.5 10 L8.9 12.9 L14.8 6.9" fill="none" stroke="#3f7d57" stroke-width="2"/></svg>
<span style="left:361.20px;top:248.52px;font-size:13px;line-height:18px;color:#2f63ad;transform:scaleX(0.9427);-webkit-text-stroke:0.2px #2f63ad;">Home</span>
<div style="left:361.6px;top:263px;width:32.299999999999955px;height:1px;background:#5b86c4;"></div>
<span style="left:361.30px;top:270.26px;font-size:9.4px;line-height:13px;color:#30353b;transform:scaleX(1.0432);-webkit-text-stroke:0.18px #30353b;">Alias: home</span>
<span style="left:361.30px;top:288.26px;font-size:9.4px;line-height:13px;color:#30353b;transform:scaleX(1.0528);-webkit-text-stroke:0.18px #30353b;">Articles » Featured Articles</span>
<span style="left:550.60px;top:249.56px;font-size:10px;line-height:14px;color:#3a3f45;transform:scaleX(0.9582);">Main Menu</span>
<svg style="left:641.5px;top:248.10000000000002px" width="20.6" height="20.6" viewBox="0 0 20.6 20.6" preserveAspectRatio="none"><circle cx="10.3" cy="10.3" r="9.0" fill="#fff" stroke="#f6b93b" stroke-width="1.5"/></svg>
<svg style="left:645.15px;top:251.95px;overflow:visible" width="13.50" height="12.00" viewBox="0 0 576 512" preserveAspectRatio="none"><path fill="#f5b021" d="M280.37 148.26L96 300.11V464a16 16 0 0 0 16 16l112.06-.29a16 16 0 0 0 15.92-16V368a16 16 0 0 1 16-16h64a16 16 0 0 1 16 16v95.64a16 16 0 0 0 16 16.05L464 480a16 16 0 0 0 16-16V300L295.67 148.26a12.19 12.19 0 0 0-15.3 0zM571.6 251.47L488 182.56V44.05a12 12 0 0 0-12-12h-56a12 12 0 0 0-12 12v72.61L318.47 43a48 48 0 0 0-61 0L4.34 251.47a12 12 0 0 0-1.6 16.9l25.5 31A12 12 0 0 0 45.15 301l235.22-193.74a12.19 12.19 0 0 1 15.3 0L530.9 301a12 12 0 0 0 16.9-1.6l25.5-31a12 12 0 0 0-1.7-16.93z"/></svg>
<span style="left:701.50px;top:249.56px;font-size:10px;line-height:14px;color:#3a3f45;transform:scaleX(0.9725);">Public</span>
<span style="left:876.80px;top:249.56px;font-size:10px;line-height:14px;color:#3a3f45;transform:scaleX(0.9528);">All</span>
<span style="left:965.25px;top:248.69px;font-size:12.5px;line-height:18px;color:#474c52;transform:scaleX(0.8989);">101</span>
<svg style="left:303.2px;top:321.3px" width="21" height="21" viewBox="0 0 20 20" preserveAspectRatio="none"><circle cx="10" cy="10" r="8.7" fill="none" stroke="#3f7d57" stroke-width="1.5"/><path d="M5.5 10 L8.9 12.9 L14.8 6.9" fill="none" stroke="#3f7d57" stroke-width="2"/></svg>
<span style="left:361.20px;top:322.52px;font-size:13px;line-height:18px;color:#2f63ad;transform:scaleX(0.9118);-webkit-text-stroke:0.2px #2f63ad;">Category One</span>
<div style="left:361.6px;top:337px;width:73.39999999999998px;height:1px;background:#5b86c4;"></div>
<span style="left:361.30px;top:343.26px;font-size:9.4px;line-height:13px;color:#30353b;transform:scaleX(1.0453);-webkit-text-stroke:0.18px #30353b;">Alias: category-one</span>
<span style="left:361.30px;top:361.26px;font-size:9.4px;line-height:13px;color:#30353b;transform:scaleX(1.0390);-webkit-text-stroke:0.18px #30353b;">Articles » Category Blog</span>
<span style="left:550.60px;top:322.56px;font-size:10px;line-height:14px;color:#3a3f45;transform:scaleX(0.9582);">Main Menu</span>
<svg style="left:641.1px;top:321.6px" width="20.6" height="20.6" viewBox="0 0 20.6 20.6" preserveAspectRatio="none"><circle cx="10.3" cy="10.3" r="9.0" fill="#fff" stroke="#d4d4d4" stroke-width="1.5"/><circle cx="10.3" cy="10.3" r="5.8" fill="#cfcfcf"/></svg>
<span style="left:701.50px;top:322.56px;font-size:10px;line-height:14px;color:#3a3f45;transform:scaleX(0.9725);">Public</span>
<span style="left:876.80px;top:322.56px;font-size:10px;line-height:14px;color:#3a3f45;transform:scaleX(0.9528);">All</span>
<span style="left:965.25px;top:321.69px;font-size:12.5px;line-height:18px;color:#474c52;transform:scaleX(0.8989);">102</span>
<svg style="left:303.2px;top:394.8px" width="21" height="21" viewBox="0 0 20 20" preserveAspectRatio="none"><circle cx="10" cy="10" r="8.7" fill="none" stroke="#3f7d57" stroke-width="1.5"/><path d="M5.5 10 L8.9 12.9 L14.8 6.9" fill="none" stroke="#3f7d57" stroke-width="2"/></svg>
<span style="left:361.20px;top:395.52px;font-size:13px;line-height:18px;color:#2f63ad;transform:scaleX(0.9065);-webkit-text-stroke:0.2px #2f63ad;">News Feed</span>
<div style="left:361.6px;top:410px;width:59.19999999999999px;height:1px;background:#5b86c4;"></div>
<span style="left:361.30px;top:417.26px;font-size:9.4px;line-height:13px;color:#30353b;transform:scaleX(1.0466);-webkit-text-stroke:0.18px #30353b;">Alias: news-feed</span>
<span style="left:361.30px;top:435.26px;font-size:9.4px;line-height:13px;color:#30353b;transform:scaleX(1.0359);-webkit-text-stroke:0.18px #30353b;">Contacts » Single Contact</span>
<span style="left:550.60px;top:396.56px;font-size:10px;line-height:14px;color:#3a3f45;transform:scaleX(0.9582);">Main Menu</span>
<svg style="left:641.1px;top:395.1px" width="20.6" height="20.6" viewBox="0 0 20.6 20.6" preserveAspectRatio="none"><circle cx="10.3" cy="10.3" r="9.0" fill="#fff" stroke="#d4d4d4" stroke-width="1.5"/><circle cx="10.3" cy="10.3" r="5.8" fill="#cfcfcf"/></svg>
<span style="left:701.50px;top:396.56px;font-size:10px;line-height:14px;color:#3a3f45;transform:scaleX(0.9725);">Public</span>
<span style="left:876.80px;top:396.56px;font-size:10px;line-height:14px;color:#3a3f45;transform:scaleX(0.9528);">All</span>
<span style="left:965.25px;top:395.69px;font-size:12.5px;line-height:18px;color:#474c52;transform:scaleX(0.8989);">103</span>
<div style="left:1023px;top:0px;width:1px;height:455px;background:#eef2f9;"></div>
</body></html>
